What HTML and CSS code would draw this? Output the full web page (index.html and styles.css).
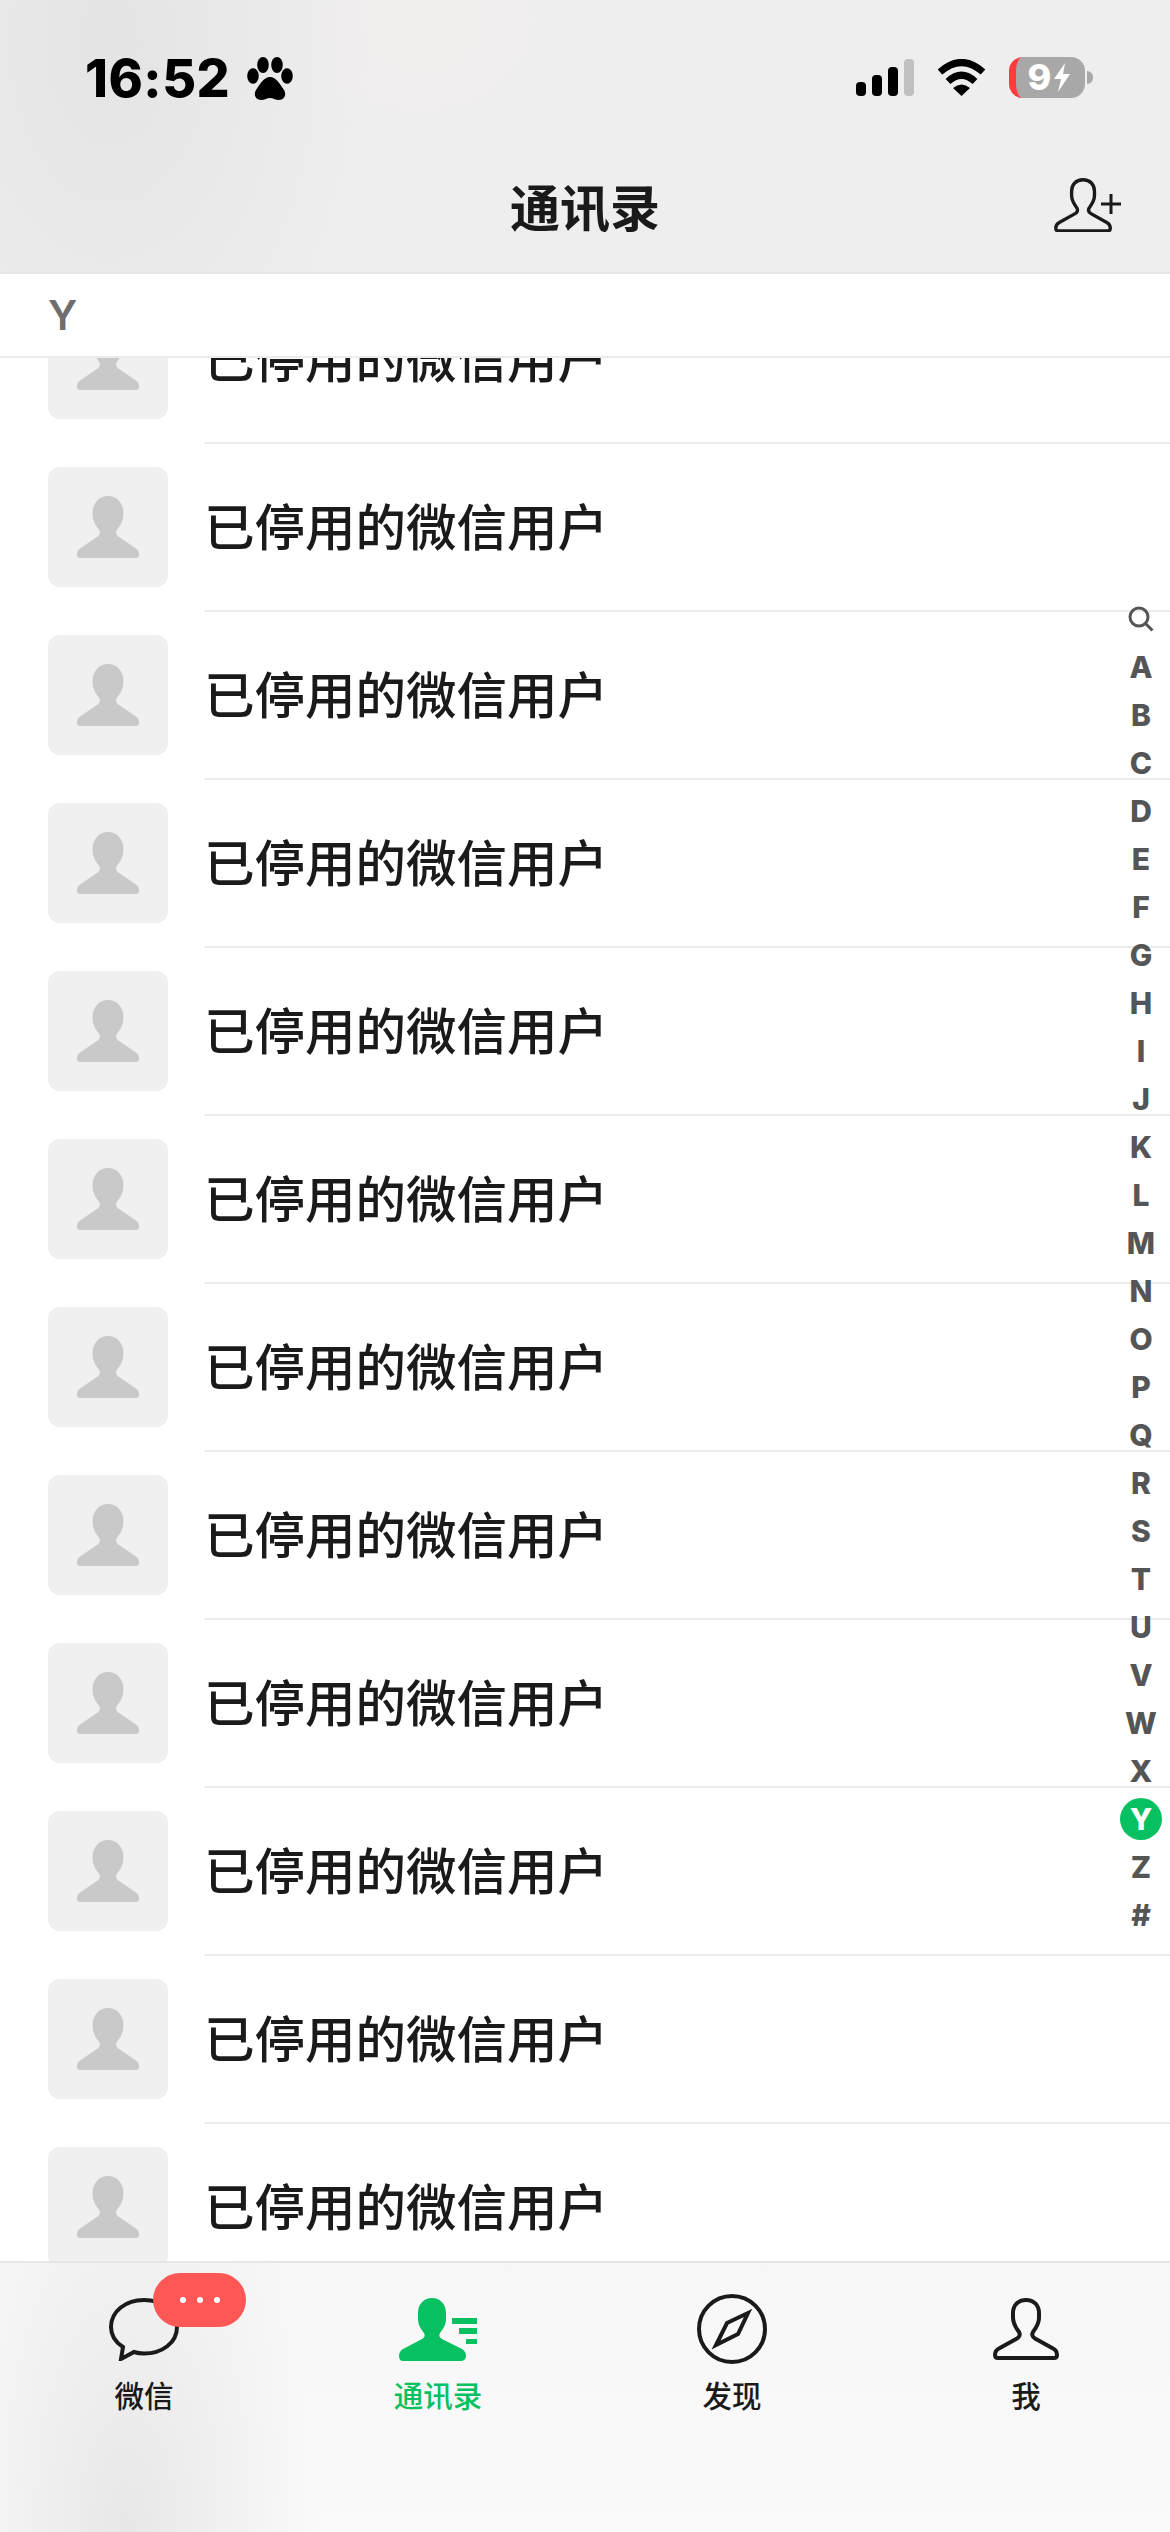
FILE: index.html
```html
<!DOCTYPE html>
<html lang="zh">
<head>
<meta charset="utf-8">
<title>通讯录</title>
<link rel="stylesheet" href="styles.css">
</head>
<body>
<div class="page">
  <header class="header">
    <div class="status">
      <div class="status-left">
        <span class="time">16:52</span>
        <svg class="paw" viewBox="0 0 46 43"><ellipse cx="6" cy="19" rx="5.8" ry="7.8"/><ellipse cx="16" cy="8" rx="5.8" ry="8"/><ellipse cx="30" cy="8" rx="5.8" ry="8"/><ellipse cx="40" cy="19" rx="5.8" ry="7.8"/><path d="M23 20C17 20 13 27 9 33C6 38 9 43 14 43C18 43 20 41 23 41C26 41 28 43 32 43C37 43 40 38 37 33C33 27 29 20 23 20Z"/></svg>
      </div>
      <div class="status-right">
        <svg class="signal" viewBox="0 0 58 37"><rect x="0" y="23" width="10" height="14" rx="4"/><rect x="16" y="16" width="10" height="21" rx="4"/><rect x="32" y="8" width="10" height="29" rx="4"/><rect class="signal-off" x="48" y="0" width="10" height="37" rx="4"/></svg>
        <svg class="wifi" viewBox="0 0 49 37"><path class="wifi-arc" d="M3 13Q24.500 -6 46 13"/><path class="wifi-arc" d="M11 22.500Q24.500 10 38 22.500"/><path d="M16 29Q24.500 22 33 29L24.500 37Z"/></svg>
        <div class="battery"><span class="battery-num">9</span><svg class="bolt" viewBox="0 0 18 29"><path d="M12 0L1 16H8L5 29L17 11H10Z"/></svg></div>
      </div>
    </div>
    <div class="nav">
      <h1 class="title">通讯录</h1>
      <svg class="add-icon" viewBox="0 0 67 54"><g transform="scale(.88)"><path class="person-line-thin" d="M33 2C25 2 20 7.500 20 15L20 20C20 26 23 30 26 34C27.500 36.500 26.500 39 24 40.500L6 50.500C3 52 2 54 2 57C2 59 3 60 5 60L61 60C63 60 64 59 64 57C64 54 63 52 60 50.500L42 40.500C39.500 39 38.500 36.500 40 34C43 30 46 26 46 20L46 15C46 7.500 41 2 33 2Z"/></g><path class="plus" d="M57 16V36M47 26H67"/></svg>
    </div>
  </header>
  <div class="section">Y</div>
  <main class="list">
    <div class="rows">
      <div class="row"><div class="avatar"><svg class="avatar-person" viewBox="0 0 62 62"><path d="M31 0C22 0 15.500 7.500 15.500 17C15.500 24 18 29 21.500 33C24 36 23 39 20 41L3 52.500C1 54 0 55.500 0 58L0 59C0 61 1 62 3 62L59 62C61 62 62 61 62 59L62 58C62 55.500 61 54 59 52.500L42 41C39 39 38 36 40.500 33C44 29 46.500 24 46.500 17C46.500 7.500 40 0 31 0Z"/></svg></div><div class="row-body">已停用的微信用户</div></div>
      <div class="row"><div class="avatar"><svg class="avatar-person" viewBox="0 0 62 62"><path d="M31 0C22 0 15.500 7.500 15.500 17C15.500 24 18 29 21.500 33C24 36 23 39 20 41L3 52.500C1 54 0 55.500 0 58L0 59C0 61 1 62 3 62L59 62C61 62 62 61 62 59L62 58C62 55.500 61 54 59 52.500L42 41C39 39 38 36 40.500 33C44 29 46.500 24 46.500 17C46.500 7.500 40 0 31 0Z"/></svg></div><div class="row-body">已停用的微信用户</div></div>
      <div class="row"><div class="avatar"><svg class="avatar-person" viewBox="0 0 62 62"><path d="M31 0C22 0 15.500 7.500 15.500 17C15.500 24 18 29 21.500 33C24 36 23 39 20 41L3 52.500C1 54 0 55.500 0 58L0 59C0 61 1 62 3 62L59 62C61 62 62 61 62 59L62 58C62 55.500 61 54 59 52.500L42 41C39 39 38 36 40.500 33C44 29 46.500 24 46.500 17C46.500 7.500 40 0 31 0Z"/></svg></div><div class="row-body">已停用的微信用户</div></div>
      <div class="row"><div class="avatar"><svg class="avatar-person" viewBox="0 0 62 62"><path d="M31 0C22 0 15.500 7.500 15.500 17C15.500 24 18 29 21.500 33C24 36 23 39 20 41L3 52.500C1 54 0 55.500 0 58L0 59C0 61 1 62 3 62L59 62C61 62 62 61 62 59L62 58C62 55.500 61 54 59 52.500L42 41C39 39 38 36 40.500 33C44 29 46.500 24 46.500 17C46.500 7.500 40 0 31 0Z"/></svg></div><div class="row-body">已停用的微信用户</div></div>
      <div class="row"><div class="avatar"><svg class="avatar-person" viewBox="0 0 62 62"><path d="M31 0C22 0 15.500 7.500 15.500 17C15.500 24 18 29 21.500 33C24 36 23 39 20 41L3 52.500C1 54 0 55.500 0 58L0 59C0 61 1 62 3 62L59 62C61 62 62 61 62 59L62 58C62 55.500 61 54 59 52.500L42 41C39 39 38 36 40.500 33C44 29 46.500 24 46.500 17C46.500 7.500 40 0 31 0Z"/></svg></div><div class="row-body">已停用的微信用户</div></div>
      <div class="row"><div class="avatar"><svg class="avatar-person" viewBox="0 0 62 62"><path d="M31 0C22 0 15.500 7.500 15.500 17C15.500 24 18 29 21.500 33C24 36 23 39 20 41L3 52.500C1 54 0 55.500 0 58L0 59C0 61 1 62 3 62L59 62C61 62 62 61 62 59L62 58C62 55.500 61 54 59 52.500L42 41C39 39 38 36 40.500 33C44 29 46.500 24 46.500 17C46.500 7.500 40 0 31 0Z"/></svg></div><div class="row-body">已停用的微信用户</div></div>
      <div class="row"><div class="avatar"><svg class="avatar-person" viewBox="0 0 62 62"><path d="M31 0C22 0 15.500 7.500 15.500 17C15.500 24 18 29 21.500 33C24 36 23 39 20 41L3 52.500C1 54 0 55.500 0 58L0 59C0 61 1 62 3 62L59 62C61 62 62 61 62 59L62 58C62 55.500 61 54 59 52.500L42 41C39 39 38 36 40.500 33C44 29 46.500 24 46.500 17C46.500 7.500 40 0 31 0Z"/></svg></div><div class="row-body">已停用的微信用户</div></div>
      <div class="row"><div class="avatar"><svg class="avatar-person" viewBox="0 0 62 62"><path d="M31 0C22 0 15.500 7.500 15.500 17C15.500 24 18 29 21.500 33C24 36 23 39 20 41L3 52.500C1 54 0 55.500 0 58L0 59C0 61 1 62 3 62L59 62C61 62 62 61 62 59L62 58C62 55.500 61 54 59 52.500L42 41C39 39 38 36 40.500 33C44 29 46.500 24 46.500 17C46.500 7.500 40 0 31 0Z"/></svg></div><div class="row-body">已停用的微信用户</div></div>
      <div class="row"><div class="avatar"><svg class="avatar-person" viewBox="0 0 62 62"><path d="M31 0C22 0 15.500 7.500 15.500 17C15.500 24 18 29 21.500 33C24 36 23 39 20 41L3 52.500C1 54 0 55.500 0 58L0 59C0 61 1 62 3 62L59 62C61 62 62 61 62 59L62 58C62 55.500 61 54 59 52.500L42 41C39 39 38 36 40.500 33C44 29 46.500 24 46.500 17C46.500 7.500 40 0 31 0Z"/></svg></div><div class="row-body">已停用的微信用户</div></div>
      <div class="row"><div class="avatar"><svg class="avatar-person" viewBox="0 0 62 62"><path d="M31 0C22 0 15.500 7.500 15.500 17C15.500 24 18 29 21.500 33C24 36 23 39 20 41L3 52.500C1 54 0 55.500 0 58L0 59C0 61 1 62 3 62L59 62C61 62 62 61 62 59L62 58C62 55.500 61 54 59 52.500L42 41C39 39 38 36 40.500 33C44 29 46.500 24 46.500 17C46.500 7.500 40 0 31 0Z"/></svg></div><div class="row-body">已停用的微信用户</div></div>
      <div class="row"><div class="avatar"><svg class="avatar-person" viewBox="0 0 62 62"><path d="M31 0C22 0 15.500 7.500 15.500 17C15.500 24 18 29 21.500 33C24 36 23 39 20 41L3 52.500C1 54 0 55.500 0 58L0 59C0 61 1 62 3 62L59 62C61 62 62 61 62 59L62 58C62 55.500 61 54 59 52.500L42 41C39 39 38 36 40.500 33C44 29 46.500 24 46.500 17C46.500 7.500 40 0 31 0Z"/></svg></div><div class="row-body">已停用的微信用户</div></div>
      <div class="row"><div class="avatar"><svg class="avatar-person" viewBox="0 0 62 62"><path d="M31 0C22 0 15.500 7.500 15.500 17C15.500 24 18 29 21.500 33C24 36 23 39 20 41L3 52.500C1 54 0 55.500 0 58L0 59C0 61 1 62 3 62L59 62C61 62 62 61 62 59L62 58C62 55.500 61 54 59 52.500L42 41C39 39 38 36 40.500 33C44 29 46.500 24 46.500 17C46.500 7.500 40 0 31 0Z"/></svg></div><div class="row-body">已停用的微信用户</div></div>
    </div>
  </main>
  <nav class="index">
    <span class="index-item"><svg class="search" viewBox="0 0 26 26"><circle cx="11" cy="11" r="9"/><path d="M17.500 17.500L24.500 24.500"/></svg></span>
    <span class="index-item">A</span><span class="index-item">B</span><span class="index-item">C</span><span class="index-item">D</span><span class="index-item">E</span><span class="index-item">F</span><span class="index-item">G</span><span class="index-item">H</span><span class="index-item">I</span><span class="index-item">J</span><span class="index-item">K</span><span class="index-item">L</span><span class="index-item">M</span><span class="index-item">N</span><span class="index-item">O</span><span class="index-item">P</span><span class="index-item">Q</span><span class="index-item">R</span><span class="index-item">S</span><span class="index-item">T</span><span class="index-item">U</span><span class="index-item">V</span><span class="index-item">W</span><span class="index-item">X</span>
    <span class="index-item"><span class="index-active">Y</span></span>
    <span class="index-item">Z</span><span class="index-item">#</span>
  </nav>
  <footer class="tabbar">
    <div class="tab">
      <div class="tab-icon">
        <svg class="icon-chat" viewBox="0 0 70 63"><path class="line" d="M35 2C17 2 2 13 2 29C2 37 6 44 14 49L12 61L25 54C28 55 32 55.500 35 55.500C53 55.500 68 45 68 29C68 13 53 2 35 2Z"/></svg>
        <div class="badge"><i></i><i></i><i></i></div>
      </div>
      <span class="tab-label">微信</span>
    </div>
    <div class="tab tab-active">
      <div class="tab-icon">
        <svg class="icon-contacts" viewBox="0 0 78 63"><path d="M33 0C25 0 19 6 19 15L19 21C19 27 22 31 25 35C26.500 37.500 25.500 39.500 23 41L4 51C1 53 0 55 0 58C0 61 1.500 63 4 63L62 63C64.500 63 67 61 67 58C67 55 66 53 63 51L43 41C40.500 39.500 39.500 37.500 41 35C44 31 47 27 47 21L47 15C47 6 41 0 33 0Z"/><rect x="53" y="20" width="25" height="6"/><rect x="60" y="30" width="18" height="6"/><rect x="67" y="41" width="11" height="5"/></svg>
      </div>
      <span class="tab-label">通讯录</span>
    </div>
    <div class="tab">
      <div class="tab-icon">
        <svg class="icon-compass" viewBox="0 0 70 70"><circle class="line" cx="35" cy="35" r="33"/><path class="line" d="M51 19L30 29L19 51L41 40Z"/></svg>
      </div>
      <span class="tab-label">发现</span>
    </div>
    <div class="tab">
      <div class="tab-icon">
        <svg class="icon-me" viewBox="0 0 66 62"><path class="line" d="M33 2C25 2 20 7.500 20 15L20 20C20 26 23 30 26 34C27.500 36.500 26.500 39 24 40.500L6 50.500C3 52 2 54 2 57C2 59 3 60 5 60L61 60C63 60 64 59 64 57C64 54 63 52 60 50.500L42 40.500C39.500 39 38.500 36.500 40 34C43 30 46 26 46 20L46 15C46 7.500 41 2 33 2Z"/></svg>
      </div>
      <span class="tab-label">我</span>
    </div>
  </footer>
</div>
</body>
</html>
```
FILE: styles.css
```css
* { box-sizing: border-box; }
html, body { margin: 0; padding: 0; }
body { font-family: "Noto Sans CJK SC", "Noto Sans", sans-serif; color: #1a1a1a; background: #fff; }
.page { position: relative; width: 1170px; height: 2532px; display: flex; flex-direction: column; overflow: hidden; }

.header {
  flex: none; height: 274px; border-bottom: 2px solid #e6e6e6;
  background:
    radial-gradient(ellipse 260px 420px at 110px 40px, #e4e4e4, rgba(228,228,228,0) 100%),
    radial-gradient(ellipse 200px 160px at 420px 20px, #f2eeee, rgba(242,238,238,0) 100%),
    #eeeeee;
}
.status { display: flex; justify-content: space-between; align-items: flex-start; padding: 57px 85px 0 85px; height: 160px; }
.status-left { display: flex; align-items: center; gap: 17px; }
.time { font-family: Inter, sans-serif; font-weight: 800; font-size: 52px; line-height: 43px; color: #000; letter-spacing: 0.5px; }
.paw { width: 46px; height: 43px; fill: #000; }
.status-right { display: flex; align-items: center; gap: 23px; height: 41px; }
.signal { width: 58px; height: 37px; fill: #000; }
.signal-off { fill: #c0c0c0; }
.wifi { width: 49px; height: 37px; fill: #000; }
.wifi-arc { fill: none; stroke: #000; stroke-width: 7; }
.battery {
  position: relative; width: 76px; height: 41px; border-radius: 14px; background: #a8a8a8;
  border-left: 7px solid #ff3b3b; display: flex; align-items: center; justify-content: center; gap: 2px; padding-right: 2px;
}
.battery::after { content: ""; position: absolute; left: 71px; top: 14px; width: 6px; height: 13px; border-radius: 0 6px 6px 0; background: #a8a8a8; }
.battery-num { font-family: Inter, sans-serif; font-weight: 800; font-size: 36px; line-height: 41px; color: #fff; }
.bolt { width: 18px; height: 29px; fill: #fff; }

.nav { display: grid; grid-template-columns: 1fr auto 1fr; align-items: center; padding: 0 50px 6px; height: 96px; }
.title { grid-column: 2; margin: 0; font-size: 50px; line-height: 90px; font-weight: 700; color: #1a1a1a; }
.add-icon { grid-column: 3; justify-self: end; width: 67px; height: 54px; margin-right: -1px; }
.person-line-thin { fill: none; stroke: #1a1a1a; stroke-width: 3.8; }
.plus { fill: none; stroke: #1a1a1a; stroke-width: 3; }

.section {
  flex: none; height: 84px; padding-left: 48px; background: #fff; border-bottom: 2px solid #ececec;
  font-family: Inter, sans-serif; font-weight: 600; font-size: 41px; line-height: 82px; color: #6e6e6e;
}

.list { flex: 1; min-height: 0; overflow: hidden; background: #fff; }
.rows { margin-top: -82px; }
.row { display: flex; align-items: center; height: 168px; padding-left: 48px; gap: 36px; }
.avatar { flex: none; width: 120px; height: 120px; margin-bottom: 2px; border-radius: 12px; background: #f0f0f0; display: flex; align-items: center; justify-content: center; }
.avatar-person { width: 62px; height: 62px; fill: #c9c9c9; }
.row-body { flex: 1; align-self: stretch; display: flex; align-items: center; padding-bottom: 6px; border-bottom: 2px solid #ececec; font-size: 50.5px; font-weight: 500; color: #1a1a1a; }

.index { position: absolute; top: 595px; right: -1px; width: 60px; display: flex; flex-direction: column; }
.index-item {
  height: 48px; display: flex; align-items: center; justify-content: center;
  font-family: Inter, sans-serif; font-weight: 800; font-size: 30px; color: #555;
}
.search { width: 26px; height: 26px; fill: none; stroke: #555; stroke-width: 3; }
.index-active { width: 42px; height: 42px; border-radius: 50%; background: #07c160; color: #fff; display: flex; align-items: center; justify-content: center; }

.tabbar {
  flex: none; height: 271px; border-top: 2px solid #e6e6e6; display: grid; grid-template-columns: repeat(4, 294px); margin-left: -3px; align-items: start;
  background:
    radial-gradient(ellipse 190px 420px at 130px 270px, #e8e7e7, rgba(232,231,231,0) 100%),
    linear-gradient(#f7f7f7, #fafafa);
}
.tab { display: flex; flex-direction: column; align-items: center; padding-top: 30px; }
.tab-icon { position: relative; height: 72px; display: flex; align-items: center; justify-content: center; }
.tab-label { margin-top: 9px; font-size: 29.5px; line-height: 40px; font-weight: 500; color: #1a1a1a; }
.tab-active .tab-label { color: #07c160; }
.line { fill: none; stroke: #1a1a1a; stroke-width: 4; }
.icon-chat { width: 70px; height: 63px; }
.icon-contacts { width: 78px; height: 63px; fill: #07c160; }
.icon-compass { width: 70px; height: 70px; }
.icon-me { width: 66px; height: 62px; }
.badge {
  position: absolute; left: 44px; top: -20px; width: 93px; height: 54px; border-radius: 27px; background: #ff5656;
  display: flex; align-items: center; justify-content: center; gap: 11px;
}
.badge i { width: 6px; height: 6px; border-radius: 50%; background: #fff; }
```
